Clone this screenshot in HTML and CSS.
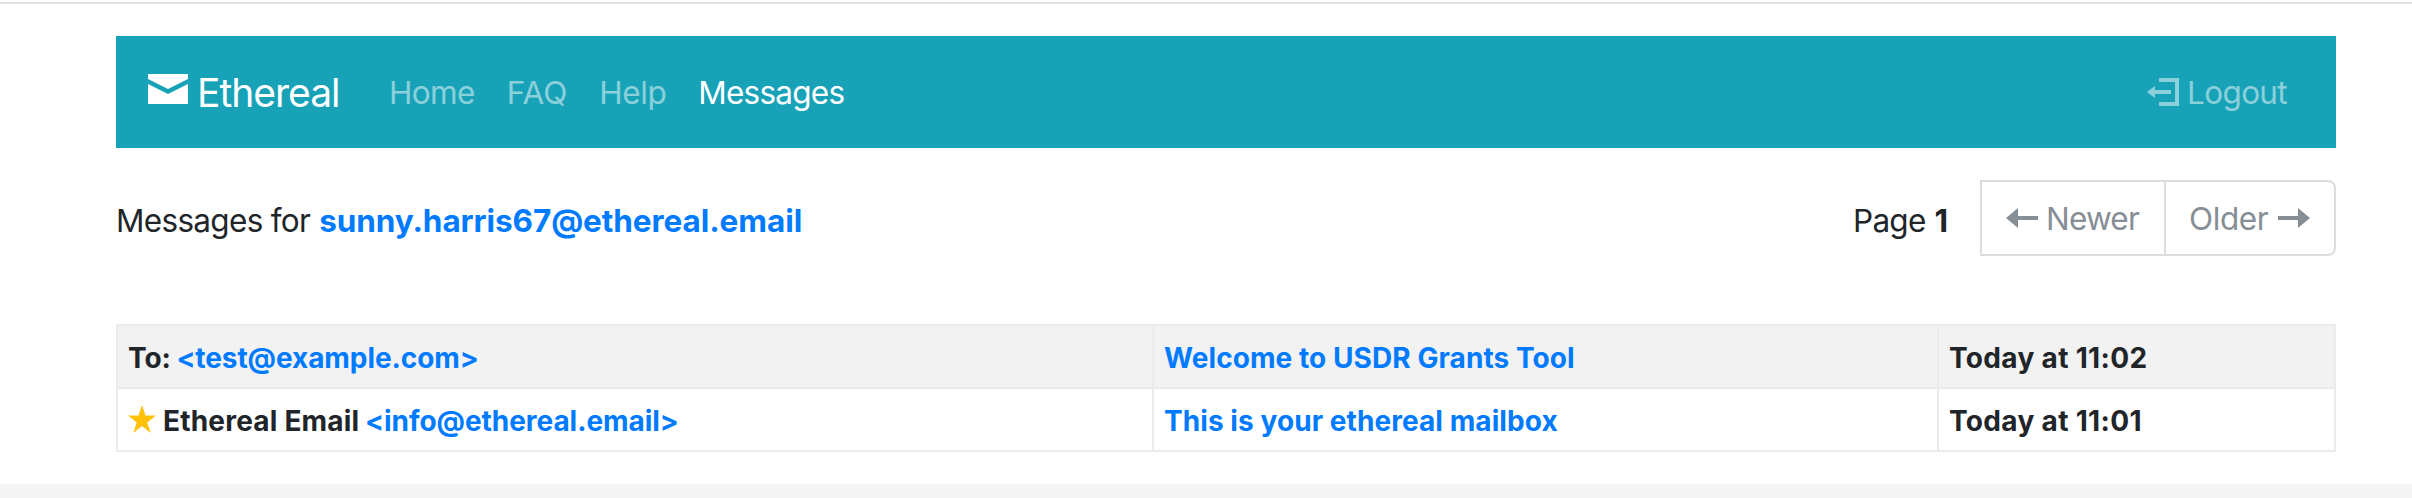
FILE: index.html
```
<!DOCTYPE html>
<html lang="en">
<head>
<meta charset="utf-8">
<title>Messages - Ethereal</title>
<link rel="stylesheet" href="styles.css">
</head>
<body>
<div class="page">
  <nav class="navbar">
    <a class="brand"><svg class="brand-icon" viewBox="0 0 8 6"><path d="M0 0v1l4 2 4-2v-1h-8zm0 2v4h8v-4l-4 2-4-2z"/></svg><span>Ethereal</span></a>
    <ul class="nav">
      <li class="nav-home">Home</li>
      <li class="nav-faq">FAQ</li>
      <li class="nav-help">Help</li>
      <li class="nav-messages active">Messages</li>
    </ul>
    <a class="logout"><svg class="logout-icon" viewBox="0 0 8 7"><path d="M3 0v1h4v5h-4v1h5v-7h-5zm-1 2l-2 1.5 2 1.5v-1h4v-1h-4v-1z"/></svg><span>Logout</span></a>
  </nav>
  <div class="toolbar">
    <div class="heading"><span class="label">Messages for</span> <a class="address">sunny.harris67@ethereal.email</a></div>
    <div class="pager">
      <div class="page-number"><span class="page-label">Page</span> <b>1</b></div>
      <div class="buttons">
        <a class="button newer"><svg class="arrow" viewBox="0 0 8 5"><path d="M3 0l-3 2.53 3 2.47v-2h5v-1h-5v-2z"/></svg><span>Newer</span></a>
        <a class="button older"><span>Older</span><svg class="arrow" viewBox="0 0 8 5"><path d="M5 0v2h-5v1h5v2l3-2.53-3-2.47z"/></svg></a>
      </div>
    </div>
  </div>
  <table class="messages">
    <colgroup><col class="col-from"><col class="col-subject"><col class="col-date"></colgroup>
    <tr class="odd">
      <td><span class="to">To:</span> <a class="test">&lt;test@example.com&gt;</a></td>
      <td><a class="subject">Welcome to USDR Grants Tool</a></td>
      <td><span class="date">Today at 11:02</span></td>
    </tr>
    <tr>
      <td><svg class="star" viewBox="0 0 8 8"><path d="M4 0l-1 3h-3l2.5 2-1 3 2.5-2 2.5 2-1-3 2.5-2h-3l-1-3z"/></svg><span class="sender">Ethereal Email</span> <a class="info">&lt;info@ethereal.email&gt;</a></td>
      <td><a class="subject">This is your ethereal mailbox</a></td>
      <td><span class="date">Today at 11:01</span></td>
    </tr>
  </table>
</div>
<footer class="footer"></footer>
</body>
</html>
```
FILE: styles.css
```
* { box-sizing: border-box; }
body {
  margin: 0;
  height: 498px;
  overflow: hidden;
  display: flex;
  flex-direction: column;
  background: #fff;
  color: #212529;
  font-family: Inter, "Liberation Sans", sans-serif;
  font-size: 31.5px;
  line-height: 48px;
  white-space: nowrap;
}
body::before {
  content: "";
  flex: none;
  height: 2px;
  margin-top: 2px;
  background: #e0e0e0;
}
svg { display: block; flex: none; fill: currentColor; }
.page { flex: none; width: 2220px; height: 480px; margin-left: 116px; padding-top: 32px; }
.navbar {
  display: flex;
  align-items: center;
  height: 112px;
  padding: 0 49px 0 32px;
  background: #17a2b8;
  color: rgba(255, 255, 255, .5);
}
.navbar span, .nav, .button span { padding-top: 2px; }
.brand { display: flex; align-items: center; width: 241px; gap: 9px; font-size: 39px; color: #fff; letter-spacing: -1px; }
.brand-icon { width: 40px; height: 30px; margin-top: -6px; }
.nav { display: flex; gap: 32px; margin: 0; padding-left: 0; padding-bottom: 0; list-style: none; }
.nav-home { letter-spacing: -.6px; }
.nav-help { letter-spacing: -.45px; }
.nav-messages { letter-spacing: -.75px; }
.active { color: #fff; }
.logout { display: flex; align-items: center; gap: 8px; margin-left: auto; letter-spacing: -.65px; }
.logout-icon { width: 32px; height: 28px; }
.toolbar { display: flex; justify-content: space-between; height: 76px; margin-top: 32px; }
.heading { padding-top: 17px; }
.label { letter-spacing: -.68px; }
.address { font-weight: 700; color: #007bff; letter-spacing: -.08px; }
.pager { display: flex; }
.page-number { padding-top: 17px; margin-right: 32px; }
.page-label { letter-spacing: -.75px; }
.buttons { display: flex; color: #868e96; }
.button { display: flex; align-items: center; height: 76px; border: 2px solid #ddd; }
.newer { width: 186px; padding-left: 24px; gap: 8px; letter-spacing: -.8px; }
.older { width: 172px; margin-left: -2px; padding: 0 24px 0 23px; justify-content: space-between; border-radius: 0 8px 8px 0; letter-spacing: -.4px; }
.arrow { width: 32px; height: 20px; }
.messages {
  width: 2220px;
  margin-top: 68px;
  border-collapse: collapse;
  table-layout: fixed;
  font-size: 28px;
  font-weight: 700;
  line-height: 42px;
}
.messages td { height: 63px; padding: 2px 10px 0; border: 2px solid #e9ecef; }
.messages a { color: #007bff; }
.odd { background: #f2f2f2; }
.col-from { width: 1036px; }
.col-subject { width: 785px; }
.col-date { width: 397px; }
.to { margin-right: -1px; letter-spacing: -.1px; }
.test { letter-spacing: -.07px; }
.sender { margin-right: -1px; letter-spacing: .2px; }
.info { letter-spacing: -.05px; }
.subject { letter-spacing: .07px; }
.date { letter-spacing: .33px; }
.star { display: inline-block; width: 28px; height: 28px; margin-right: 7px; vertical-align: -2px; color: #ffc107; }
.footer { flex: 1; background: #f5f5f5; }
```
